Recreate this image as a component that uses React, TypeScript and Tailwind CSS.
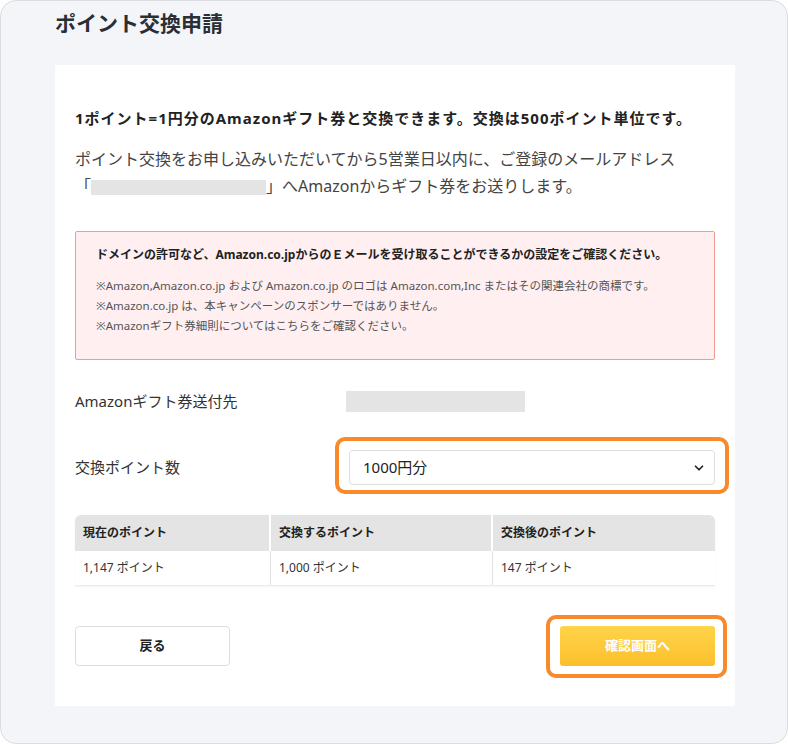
import { ChevronDown } from 'lucide-react'

const font = { fontFamily: '"Noto Sans", "Noto Sans CJK JP", sans-serif' }

export default function App() {
  return (
    <div
      style={font}
      className="w-[788px] h-[744px] box-border rounded-[16px] border border-[#dcdde1] bg-[#f4f5f9] px-[54px] text-[#333]"
    >
      <h1 className="pt-[8px] h-[64px] text-[21px] leading-[28px] font-bold text-[#2a2e35]">ポイント交換申請</h1>

      <div className="w-[680px] bg-white px-[20px] pt-[43px] pb-[40px]">
        <p className="text-[15px] leading-[20px] font-bold text-[#222] tracking-[1px]">
          1ポイント=1円分のAmazonギフト券と交換できます。交換は500ポイント単位です。
        </p>
        <p className="mt-[18px] text-[16px] leading-[27px] text-[#444]">
          ポイント交換をお申し込みいただいてから5営業日以内に、ご登録のメールアドレス
          <br />
          「<span className="inline-block align-[-3px] w-[175px] h-[15px] bg-[#e4e4e4]"></span>」へAmazonからギフト券をお送りします。
        </p>

        <div className="mt-[31px] h-[129px] rounded-[2px] border border-[#f39a92] bg-[#ffeff0] px-[20px] pt-[13px]">
          <p className="text-[12px] leading-[20px] font-bold text-[#222]">
            ドメインの許可など、Amazon.co.jpからのＥメールを受け取ることができるかの設定をご確認ください。
          </p>
          <div className="mt-[11px] text-[11.5px] leading-[20px] text-[#555]">
            <p>※Amazon,Amazon.co.jp および Amazon.co.jp のロゴは Amazon.com,Inc またはその関連会社の商標です。</p>
            <p>※Amazon.co.jp は、本キャンペーンのスポンサーではありません。</p>
            <p>※Amazonギフト券細則についてはこちらをご確認ください。</p>
          </div>
        </div>

        <div className="mt-[30px] flex items-center h-[22px]">
          <div className="w-[271px] text-[15px] text-[#333]">Amazonギフト券送付先</div>
          <div className="w-[179px] h-[21px] bg-[#e4e4e4]"></div>
        </div>

        <div className="mt-[38px] flex items-center">
          <div className="w-[274px] text-[15px] text-[#333]">交換ポイント数</div>
          <div className="relative flex-1">
            <div className="absolute -top-[13px] -bottom-[9px] -left-[14px] -right-[14px] rounded-[10px] border-[4px] border-[#f88a2b]"></div>
            <div className="relative flex items-center justify-between h-[35px] rounded-[4px] border border-[#dedede] bg-white pl-[13px] pr-[8px]">
              <span className="text-[15px] text-[#222]">1000円分</span>
              <ChevronDown className="w-[14px] h-[14px] text-[#222]" strokeWidth={3} />
            </div>
          </div>
        </div>

        <div className="mt-[30px] rounded-t-[6px] overflow-hidden border-b border-[#ececec] shadow-[0_1px_2px_rgba(0,0,0,0.05)]">
          <div className="grid grid-cols-[196px_222px_222px] bg-[#e4e4e4] h-[36px] text-[12px] font-bold text-[#222]">
            <div className="flex items-center px-[8px] border-r-2 border-white">現在のポイント</div>
            <div className="flex items-center px-[8px] border-r-2 border-white">交換するポイント</div>
            <div className="flex items-center px-[8px]">交換後のポイント</div>
          </div>
          <div className="grid grid-cols-[196px_222px_222px] bg-white h-[34px] text-[12px] text-[#333]">
            <div className="flex items-center px-[8px] border-r border-[#e2e2e2]">1,147 ポイント</div>
            <div className="flex items-center px-[8px] border-r border-[#e2e2e2]">1,000 ポイント</div>
            <div className="flex items-center px-[8px]">147 ポイント</div>
          </div>
        </div>

        <div className="mt-[40px] flex items-center justify-between">
          <button className="w-[155px] h-[40px] rounded-[4px] border border-[#dedede] bg-white text-[13px] font-bold text-[#222]">
            戻る
          </button>
          <div className="relative">
            <div className="absolute -top-[11px] -bottom-[12px] -left-[14px] -right-[12px] rounded-[10px] border-[4px] border-[#f88a2b]"></div>
            <button className="relative w-[155px] h-[40px] rounded-[3px] bg-gradient-to-b from-[#ffd449] to-[#fcbf2c] text-[13px] font-bold text-white">
              確認画面へ
            </button>
          </div>
        </div>
      </div>
    </div>
  )
}
